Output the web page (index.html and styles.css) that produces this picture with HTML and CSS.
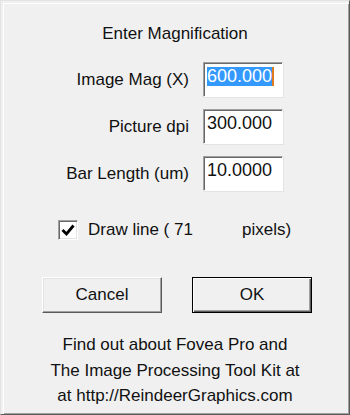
FILE: index.html
```html
<!DOCTYPE html>
<html lang="en">
<head>
  <meta charset="UTF-8">
  <title>Enter Magnification</title>
  <link rel="stylesheet" href="styles.css">
</head>
<body>
  <div class="dialog">
    <h2 class="title">Enter Magnification</h2>

    <div class="form">
      <label>Image Mag (X)</label>
      <div class="field"><span class="sel">600.000</span><span class="caret"></span></div>

      <label>Picture dpi</label>
      <div class="field">300.000</div>

      <label>Bar Length (um)</label>
      <div class="field">10.0000</div>
    </div>

    <div class="check-row">
      <span class="checkbox">
        <svg width="16" height="16" viewBox="0 0 16 16">
          <polyline points="2.5,8 6.5,12 13.5,3.5" fill="none" stroke="#000" stroke-width="2.8"/>
        </svg>
      </span>
      <span class="draw">Draw line ( 71</span>
      <span>pixels)</span>
    </div>

    <div class="buttons">
      <button class="btn">Cancel</button>
      <button class="btn default">OK</button>
    </div>

    <p class="info">
      Find out about Fovea Pro and<br>
      The Image Processing Tool Kit at<br>
      at http://ReindeerGraphics.com
    </p>
  </div>
</body>
</html>
```

FILE: styles.css
```css
* {
  margin: 0;
  padding: 0;
  box-sizing: border-box;
}

body {
  font-family: "Liberation Sans", Arial, sans-serif;
  font-size: 17px;
  color: #111;
  background: #f0f0f0;
}

.dialog {
  width: 350px;
  height: 415px;
  background: #f0f0f0;
  border: 1px solid;
  border-color: #e3e3e3 #5a5a5a #5a5a5a #e3e3e3;
  box-shadow: inset 2px 2px 0 #f0f0f0, inset 3px 3px 0 #fff, inset -1px -1px 0 #a0a0a0;
  display: flex;
  flex-direction: column;
  padding-top: 23px;
}

.title {
  font-size: 17px;
  font-weight: normal;
  line-height: 20px;
  text-align: center;
}

.form {
  margin-top: 18px;
  display: grid;
  grid-template-columns: 1fr 80px;
  grid-auto-rows: 35px;
  column-gap: 14px;
  row-gap: 12px;
  align-items: center;
  padding-right: 66px;
}

.form label {
  justify-self: end;
  line-height: 20px;
}

.field {
  height: 35px;
  background: #fff;
  border: 1px solid;
  border-color: #a0a0a0 #fff #fff #a0a0a0;
  box-shadow: inset 1px 1px 0 #696969, 1px 1px 0 #e3e3e3;
  padding: 4px 0 0 3px;
  font-size: 18px;
  line-height: 19px;
  display: flex;
  align-items: flex-start;
}

.sel {
  background: #3399ff;
  color: #fff;
}

.caret {
  width: 2px;
  height: 19px;
  background: #e07a1f;
}

.check-row {
  margin-top: 29px;
  display: flex;
  align-items: center;
  padding-left: 57px;
  line-height: 20px;
}

.checkbox {
  width: 20px;
  height: 20px;
  background: #fff;
  border: 1px solid;
  border-color: #a0a0a0 #fff #fff #a0a0a0;
  box-shadow: inset 1px 1px 0 #696969, inset -1px -1px 0 #e3e3e3;
  display: flex;
  align-items: center;
  justify-content: center;
  margin-right: 10px;
}

.draw {
  width: 154px;
}

.buttons {
  margin-top: 37px;
  display: flex;
  gap: 30px;
  padding-left: 41px;
}

.btn {
  width: 120px;
  height: 36px;
  font-family: inherit;
  font-size: 17px;
  color: #111;
  background: #f0f0f0;
  border: 1px solid;
  border-color: #fff #5a5a5a #5a5a5a #fff;
  box-shadow: inset -1px -1px 0 #a0a0a0, inset 1px 1px 0 #e3e3e3;
}

.btn.default {
  border: 1px solid #000;
  box-shadow: inset 1px 1px 0 #fff, inset -1px -1px 0 #5a5a5a, inset -2px -2px 0 #a0a0a0;
}

.info {
  margin-top: 19px;
  text-align: center;
  line-height: 25.5px;
}
```
